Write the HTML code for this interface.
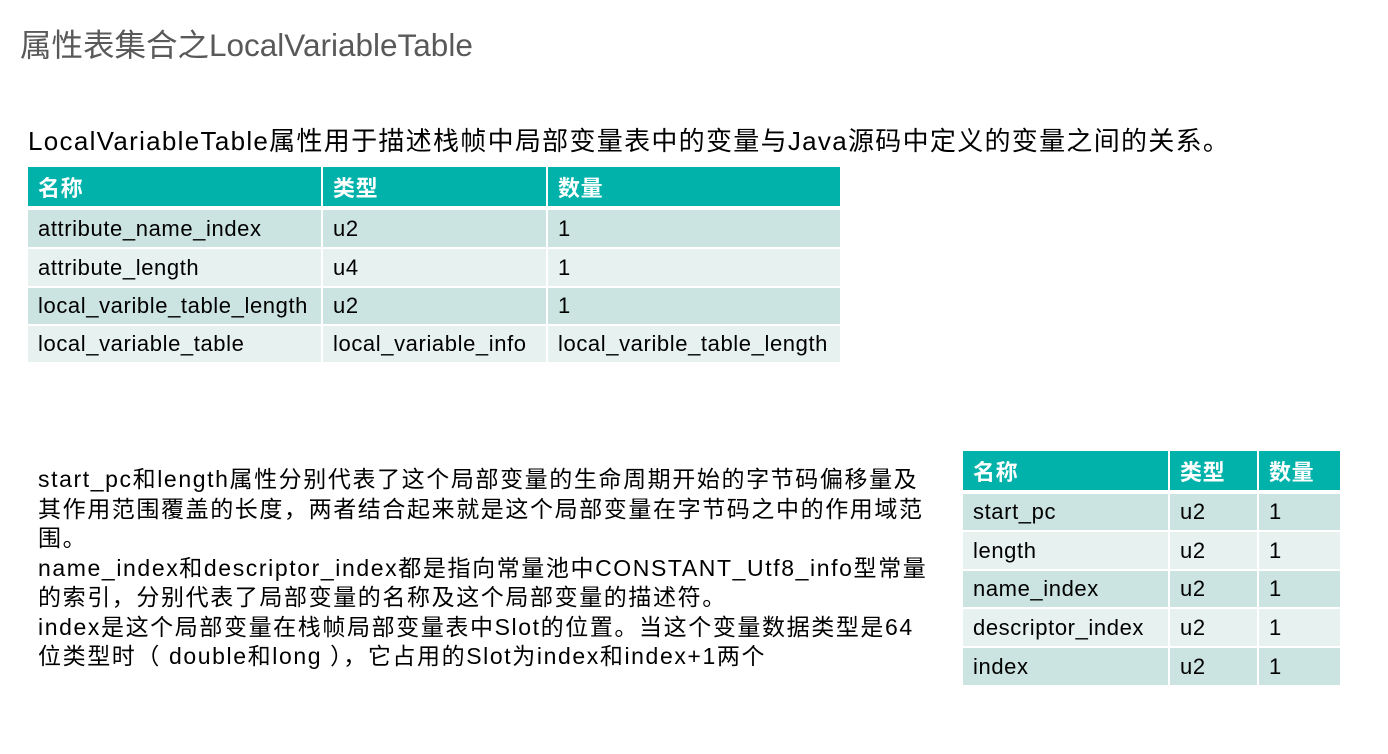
<!DOCTYPE html>
<html><head><meta charset="utf-8"><style>
body{margin:0;width:1388px;height:754px;background:#fff;position:relative;overflow:hidden;font-family:"Liberation Sans","Noto Sans CJK SC",sans-serif;color:#000}
.a{position:absolute;white-space:nowrap}
.c{position:absolute;box-sizing:border-box;padding-left:10px;font-size:22px;letter-spacing:0.6px;display:flex;align-items:center}
.h{background:#00b2aa;color:#fff;font-weight:bold}
.d{background:#cce4e1}
.l{background:#e6f1f0}
</style></head><body>
<div class="a" style="left:20px;top:20px;font-size:31.5px;color:#595959">属性表集合之LocalVariableTable</div>
<div class="a" style="left:28px;top:121px;font-size:26px;letter-spacing:1.3px">LocalVariableTable属性用于描述栈帧中局部变量表中的变量与Java源码中定义的变量之间的关系。</div>
<div class="a" style="left:38px;top:465px;font-size:23px;line-height:29.5px;letter-spacing:1.6px">start_pc和length属性分别代表了这个局部变量的生命周期开始的字节码偏移量及<br>其作用范围覆盖的长度，两者结合起来就是这个局部变量在字节码之中的作用域范<br>围。<br>name_index和descriptor_index都是指向常量池中CONSTANT_Utf8_info型常量<br>的索引，分别代表了局部变量的名称及这个局部变量的描述符。<br>index是这个局部变量在栈帧局部变量表中Slot的位置。当这个变量数据类型是64<br>位类型时（ double和long ），它占用的Slot为index和index+1两个</div>
<script>
function tbl(cols,rows,data){
 let h='';
 data.forEach((r,i)=>{r.forEach((t,j)=>{
  const cls=i==0?'h':(i%2?'d':'l');
  h+=`<div class="c ${cls}" style="left:${cols[j][0]}px;width:${cols[j][1]-cols[j][0]}px;top:${rows[i][0]}px;height:${rows[i][1]-rows[i][0]}px">${t}</div>`;
 })});
 document.body.insertAdjacentHTML('beforeend',h);
}
tbl([[28,321],[323,546],[548,840]],[[167,206],[210,247],[249,286],[288,324],[326,362]],
[['名称','类型','数量'],['attribute_name_index','u2','1'],['attribute_length','u4','1'],['local_varible_table_length','u2','1'],['local_variable_table','local_variable_info','local_varible_table_length']]);
tbl([[963,1168],[1170,1257],[1259,1340]],[[451,490],[494,530],[532,569],[571,607],[609,646],[648,685]],
[['名称','类型','数量'],['start_pc','u2','1'],['length','u2','1'],['name_index','u2','1'],['descriptor_index','u2','1'],['index','u2','1']]);
</script>
</body></html>
